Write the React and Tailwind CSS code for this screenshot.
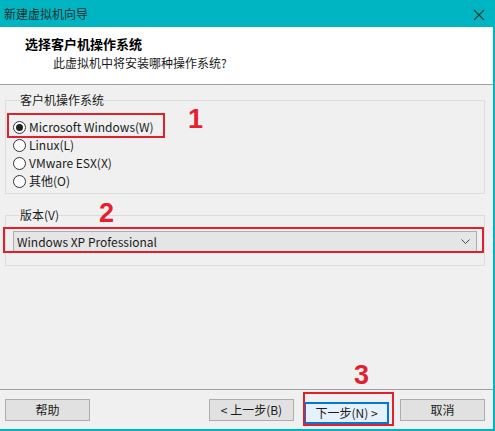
import React, { useState } from "react";

const font = { fontFamily: '"Noto Sans CJK SC", "Noto Sans", sans-serif' };

function Radio({ label, checked, onClick }) {
  return (
    <div className="flex items-center h-[18px] gap-[3px] cursor-default" onClick={onClick}>
      <span className="w-[13px] h-[13px] rounded-full border border-[#333] bg-white flex items-center justify-center">
        {checked && <span className="w-[7px] h-[7px] rounded-full bg-[#222]" />}
      </span>
      <span className="text-[12px] leading-[16px] text-[#1a1a1a]">{label}</span>
    </div>
  );
}

function Btn({ children, primary, className = "" }) {
  return (
    <button
      className={
        "w-[85px] h-[22px] text-[12px] leading-[16px] text-[#1a1a1a] border " +
        (primary ? "bg-[#e5f1fb] border-[#0078d7] border-2 " : "bg-[#e1e1e1] border-[#adadad] ") +
        className
      }
    >
      {children}
    </button>
  );
}

function Mark({ n, className }) {
  return (
    <span
      className={"absolute text-[27px] leading-[27px] font-bold text-[#e5202e] " + className}
      style={{ fontFamily: '"Liberation Sans", Arial, sans-serif' }}
    >
      {n}
    </span>
  );
}

// red annotation frame drawn over an element
function Frame({ className }) {
  return <span className={"absolute border-2 border-[#e0212d] pointer-events-none " + className} />;
}

const App = () => {
  const [os, setOs] = useState(0);
  const options = ["Microsoft Windows(W)", "Linux(L)", "VMware ESX(X)", "其他(O)"];

  return (
    <div
      className="relative w-[495px] h-[431px] bg-[#f0f0f0] flex flex-col border-r-2 border-b-2 border-[#00b5c2] overflow-hidden"
      style={font}
    >
      {/* title bar */}
      <div className="h-[27px] bg-[#00b5c2] flex items-center justify-between pl-[4px] pr-[8px] shrink-0">
        <span className="text-[12px] text-[#1b2b2c]">新建虚拟机向导</span>
        <svg width="12" height="12" viewBox="0 0 12 12" className="mt-[2px]">
          <path d="M1 1 L11 11 M11 1 L1 11" stroke="#1e3a3c" strokeWidth="1.1" />
        </svg>
      </div>

      {/* header */}
      <div className="h-[58px] bg-white border-b border-[#a0a0a0] shrink-0 pt-[8px]">
        <div className="pl-[25px] text-[13px] leading-[18px] font-bold text-black">选择客户机操作系统</div>
        <div className="pl-[53px] mt-[1px] text-[12px] leading-[18px] text-[#1a1a1a]">此虚拟机中将安装哪种操作系统?</div>
      </div>

      {/* body */}
      <div className="relative flex-1 pl-[5px] pr-[8px]">
        <fieldset className="mt-[7px] border border-[#dcdcdc] pl-[7px] pb-[3px]">
          <legend className="ml-[7px] text-[12px] leading-[16px] text-[#1a1a1a]">客户机操作系统</legend>
          <div className="pt-[10px]">
            {options.map((o, i) => (
              <div key={o} className="relative">
                <Radio label={o} checked={os === i} onClick={() => setOs(i)} />
                {i === 0 && <Frame className="-left-[6px] w-[158px] -top-[5px] -bottom-[2px]" />}
              </div>
            ))}
          </div>
        </fieldset>

        <fieldset className="mt-[13px] border border-[#dcdcdc] px-[7px] pb-[13px]">
          <legend className="ml-[7px] text-[12px] leading-[16px] text-[#1a1a1a]">版本(V)</legend>
          <div className="relative mt-[8px]">
            <div className="h-[21px] bg-[#e5e5e5] border border-[#adadad] flex items-center justify-between pl-[3px] pr-[6px]">
              <span className="text-[12px] leading-[16px] text-[#1a1a1a]">Windows XP Professional</span>
              <svg width="9" height="5" viewBox="0 0 9 5">
                <path d="M0.5 0.5 L4.5 4.5 L8.5 0.5" fill="none" stroke="#444" strokeWidth="1" />
              </svg>
            </div>
            <Frame className="-left-[10px] -right-[7px] -top-[4px] -bottom-[1px]" />
          </div>
        </fieldset>

        <Mark n="1" className="left-[188px] top-[21px]" />
        <Mark n="2" className="left-[99px] top-[115px]" />
        <Mark n="3" className="left-[354px] top-[277px]" />
      </div>

      {/* footer */}
      <div className="h-[40px] border-t border-[#a0a0a0] shrink-0 flex items-start pt-[9px] pl-[5px] pr-[8px]">
        <Btn>帮助</Btn>
        <div className="flex-1" />
        <Btn>&lt; 上一步(B)</Btn>
        <div className="relative ml-[10px]">
          <Btn primary>下一步(N) &gt;</Btn>
          <Frame className="-left-[1px] -right-[5px] -top-[7px] -bottom-[2px]" />
        </div>
        <Btn className="ml-[11px]">取消</Btn>
      </div>
    </div>
  );
};

export default App;
